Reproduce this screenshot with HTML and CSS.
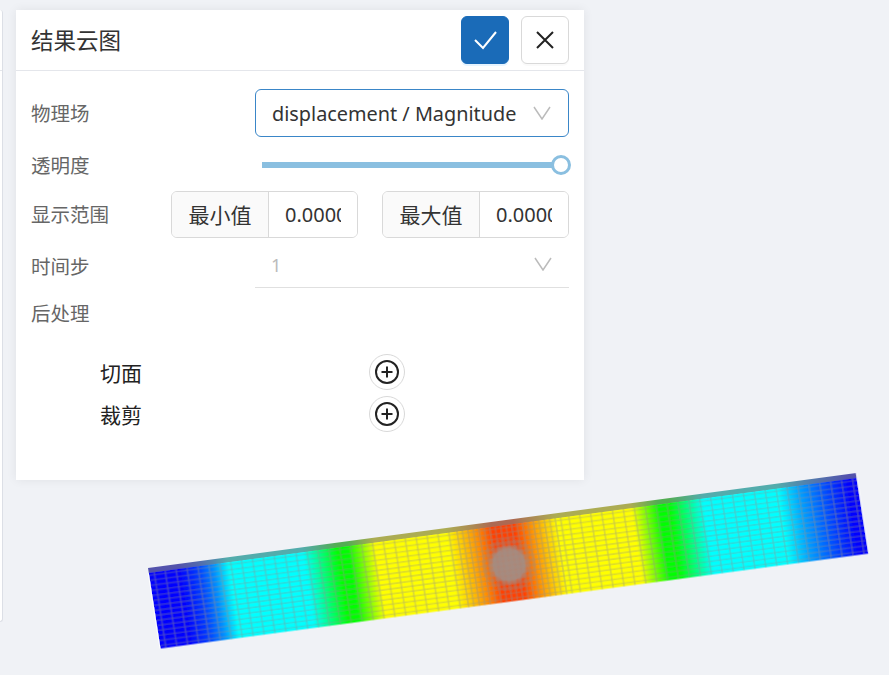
FILE: index.html
```html
<!DOCTYPE html>
<html lang="zh">
<head>
    <meta charset="UTF-8">
    <meta name="viewport" content="width=device-width, initial-scale=1.0">
    <title>结果云图</title>
    <link rel="stylesheet" href="styles.css">
</head>
<body>
    <svg class="beam" width="889" height="675" viewBox="0 0 889 675">
        <defs>
            <linearGradient id="contour" gradientUnits="userSpaceOnUse" x1="0" y1="0" x2="714" y2="0">
                <stop offset="0" stop-color="#0000ff"/>
                <stop offset="0.042" stop-color="#0000ff"/>
                <stop offset="0.07" stop-color="#0040ff"/>
                <stop offset="0.091" stop-color="#0090ff"/>
                <stop offset="0.112" stop-color="#00ffff"/>
                <stop offset="0.217" stop-color="#00ffff"/>
                <stop offset="0.266" stop-color="#00ff00"/>
                <stop offset="0.28" stop-color="#00ff00"/>
                <stop offset="0.319" stop-color="#ffff00"/>
                <stop offset="0.42" stop-color="#ffff00"/>
                <stop offset="0.462" stop-color="#ff9000"/>
                <stop offset="0.485" stop-color="#ff4000"/>
                <stop offset="0.515" stop-color="#ff4000"/>
                <stop offset="0.538" stop-color="#ff9000"/>
                <stop offset="0.576" stop-color="#ffff00"/>
                <stop offset="0.681" stop-color="#ffff00"/>
                <stop offset="0.72" stop-color="#00ff00"/>
                <stop offset="0.734" stop-color="#00ff00"/>
                <stop offset="0.783" stop-color="#00ffff"/>
                <stop offset="0.888" stop-color="#00ffff"/>
                <stop offset="0.918" stop-color="#00a0ff"/>
                <stop offset="0.952" stop-color="#0050ff"/>
                <stop offset="0.987" stop-color="#0000ff"/>
                <stop offset="1" stop-color="#0000ff"/>
            </linearGradient>
            <pattern id="mesh-wide" patternUnits="userSpaceOnUse" width="11" height="5.1" y="5">
                <path d="M0 2.55H11M5.5 0V5.1" class="mesh-line"/>
            </pattern>
            <pattern id="mesh-fine" patternUnits="userSpaceOnUse" width="5.5" height="5.1" y="5">
                <path d="M0 2.55H5.5M2.75 0V5.1" class="mesh-line"/>
            </pattern>
            <pattern id="mesh-dense" patternUnits="userSpaceOnUse" width="2.75" height="2.55" y="5">
                <path d="M0 1.27H2.75M1.37 0V2.55" class="mesh-line"/>
            </pattern>
            <radialGradient id="refine">
                <stop offset="0" stop-color="#a09088" stop-opacity="0.9"/>
                <stop offset="0.75" stop-color="#a09088" stop-opacity="0.85"/>
                <stop offset="1" stop-color="#a09088" stop-opacity="0"/>
            </radialGradient>
            <filter id="soft"><feGaussianBlur stdDeviation="0.35"/></filter>
        </defs>
        <g transform="matrix(0.9916 -0.133 0.1524 0.982 148 568)" filter="url(#soft)">
            <rect x="0" y="0" width="714" height="82" fill="url(#contour)"/>
            <rect x="0" y="5" width="308" height="77" fill="url(#mesh-wide)"/>
            <rect x="308" y="5" width="110" height="77" fill="url(#mesh-fine)"/>
            <rect x="418" y="5" width="296" height="77" fill="url(#mesh-wide)"/>
            <circle cx="357" cy="45" r="27" fill="url(#mesh-dense)" opacity="0.5"/>
            <circle cx="357" cy="45" r="21" fill="url(#refine)"/>
            <rect x="0" y="0" width="714" height="5" fill="#808080" opacity="0.65"/>
            <path d="M714.5 0L714.5 82" class="beam-edge"/>
            <path d="M-0.5 5L-0.5 82" class="beam-edge"/>
        </g>
    </svg>

    <div class="layout">
        <div class="side-panel">
            <div class="side-head"></div>
        </div>

        <section class="dialog">
            <header class="dialog-head">
                <h2 class="dialog-title">结果云图</h2>
                <button class="btn btn-primary" aria-label="确定">
                    <svg width="24" height="24" viewBox="0 0 24 24"><path d="M2 12l8 8L23 4" class="icon-ok"/></svg>
                </button>
                <button class="btn" aria-label="关闭">
                    <svg width="24" height="24" viewBox="0 0 24 24"><path d="M4 4l16 16M20 4L4 20" class="icon-close"/></svg>
                </button>
            </header>

            <div class="form">
                <div class="row row-field">
                    <label class="label">物理场</label>
                    <div class="select select-open">
                        <span class="select-text">displacement / Magnitude</span>
                        <svg class="chevron" width="18" height="14" viewBox="0 0 18 14"><path d="M1 1l8 12 8-12"/></svg>
                    </div>
                </div>

                <div class="row row-slider">
                    <label class="label">透明度</label>
                    <div class="slider">
                        <div class="slider-track"></div>
                        <div class="slider-handle"></div>
                    </div>
                </div>

                <div class="row row-range">
                    <label class="label">显示范围</label>
                    <div class="range-groups">
                        <div class="input-group">
                            <span class="addon">最小值</span>
                            <input class="group-input" type="text" value="0.00000">
                        </div>
                        <div class="input-group">
                            <span class="addon">最大值</span>
                            <input class="group-input" type="text" value="0.00000">
                        </div>
                    </div>
                </div>

                <div class="row row-field row-time">
                    <label class="label">时间步</label>
                    <div class="select select-flat">
                        <span class="select-text">1</span>
                        <svg class="chevron" width="18" height="14" viewBox="0 0 18 14"><path d="M1 1l8 12 8-12"/></svg>
                    </div>
                </div>

                <div class="row row-post">
                    <label class="label">后处理</label>
                </div>

                <ul class="post-list">
                    <li class="post-item">
                        <span class="post-name">切面</span>
                        <button class="add-btn" aria-label="添加切面">
                            <svg width="26" height="26" viewBox="0 0 26 26"><circle cx="13" cy="13" r="11"/><path d="M7.5 13h11M13 7.5v11"/></svg>
                        </button>
                    </li>
                    <li class="post-item">
                        <span class="post-name">裁剪</span>
                        <button class="add-btn" aria-label="添加裁剪">
                            <svg width="26" height="26" viewBox="0 0 26 26"><circle cx="13" cy="13" r="11"/><path d="M7.5 13h11M13 7.5v11"/></svg>
                        </button>
                    </li>
                </ul>
            </div>
        </section>
    </div>
</body>
</html>
```

FILE: styles.css
```css
* {
    box-sizing: border-box;
}

html, body {
    height: 100%;
}

body {
    margin: 0;
    background: #f0f2f6;
    font-family: "Noto Sans", "Noto Sans CJK SC", sans-serif;
    color: #333;
    overflow: hidden;
    position: relative;
}

/* model on the canvas */
.beam {
    position: absolute;
    left: 0;
    top: 0;
}

.mesh-line {
    stroke: #909090;
    stroke-opacity: 0.6;
    stroke-width: 1;
    fill: none;
}

.beam-edge {
    stroke: #fff;
    stroke-width: 1;
    fill: none;
}

.layout {
    position: relative;
    display: flex;
    align-items: flex-start;
    gap: 13px;
    padding-top: 10px;
}

.side-panel {
    width: 3px;
    height: 612px;
    background: #fff;
    border-right: 1px solid #dcdfe6;
    border-bottom: 1px solid #dcdfe6;
    border-radius: 0 4px 4px 0;
}

.side-head {
    height: 61px;
    border-bottom: 1px solid #e4e6eb;
}

.dialog {
    width: 568px;
    height: 470px;
    background: #fff;
    box-shadow: 0 0 10px rgba(0, 0, 0, 0.07);
}

.dialog-head {
    height: 61px;
    display: flex;
    align-items: center;
    gap: 12px;
    padding: 0 15px;
    border-bottom: 1px solid #e4e6eb;
}

.dialog-title {
    margin: -2px auto 0 0;
    font-size: 22.5px;
    font-weight: 400;
    color: #333;
}

.btn {
    width: 48px;
    height: 48px;
    display: flex;
    align-items: center;
    justify-content: center;
    padding: 0;
    background: #fff;
    border: 1px solid #d9d9d9;
    border-radius: 6px;
    box-shadow: 0 2px 0 rgba(0, 0, 0, 0.02);
}

.btn-primary {
    background: #1a6bb8;
    border-color: #1a6bb8;
    box-shadow: 0 2px 0 rgba(5, 145, 255, 0.1);
}

.icon-ok {
    stroke: #fff;
    stroke-width: 2;
    fill: none;
}

.icon-close {
    stroke: #222;
    stroke-width: 2;
    fill: none;
}

.form {
    display: flex;
    flex-direction: column;
    padding: 18px 15px 0;
}

.row {
    display: flex;
    align-items: center;
    justify-content: space-between;
}

.label {
    margin-top: -2px;
    font-size: 19.5px;
    color: #666;
}

.row-field {
    height: 48px;
}

.row-slider {
    height: 36px;
    margin-top: 10px;
}

.row-range {
    height: 47px;
    margin-top: 8px;
}

.row-time {
    margin-top: 2px;
}

.row-time .label {
    padding-top: 5px;
}

.select-flat .select-text {
    padding-top: 3px;
}

.row-post {
    height: 26px;
    margin-top: 12px;
}

.select {
    width: 314px;
    height: 48px;
    display: flex;
    align-items: center;
    justify-content: space-between;
    padding: 0 17px 0 16px;
    background: #fff;
    font-size: 19.85px;
}

.select-open {
    border: 1px solid #3a86c8;
    border-radius: 6px;
}

.select-flat {
    border-bottom: 1px solid #e0e0e0;
    color: #bbb;
    font-size: 18px;
}

.chevron path {
    stroke: #bbb;
    stroke-width: 1.5;
    fill: none;
}

.slider {
    position: relative;
    width: 314px;
    height: 20px;
}

.slider-track {
    margin: 7px 8px 0 7px;
    height: 6px;
    background: #8abfe0;
}

/* knob sits over the end of the track */
.slider-handle {
    position: absolute;
    right: -2px;
    top: 0;
    width: 20px;
    height: 20px;
    background: #fff;
    border: 3px solid #8abfe0;
    border-radius: 50%;
}

.range-groups {
    display: flex;
    gap: 24px;
}

.input-group {
    width: 187px;
    height: 47px;
    display: flex;
    border: 1px solid #d9d9d9;
    border-radius: 6px;
    overflow: hidden;
}

.addon {
    width: 97px;
    display: flex;
    align-items: center;
    justify-content: center;
    flex: none;
    padding-bottom: 2px;
    background: #fafafa;
    border-right: 1px solid #d9d9d9;
    font-size: 21px;
}

.group-input {
    width: 100%;
    min-width: 0;
    padding: 0 16px;
    border: none;
    outline: none;
    font-family: inherit;
    font-size: 20px;
    color: #333;
    background: #fff;
}

.post-list {
    list-style: none;
    margin: 28px 0 0;
    padding: 0 0 0 69px;
    display: flex;
    flex-direction: column;
    gap: 6px;
}

.post-item {
    display: grid;
    grid-template-columns: 269px 36px;
    align-items: center;
    height: 36px;
}

.post-name {
    font-size: 21px;
    color: #222;
}

.add-btn {
    width: 36px;
    height: 36px;
    display: flex;
    align-items: center;
    justify-content: center;
    padding: 0;
    background: #fff;
    border: 1px solid #d9d9d9;
    border-radius: 50%;
}

.add-btn circle,
.add-btn path {
    stroke: #222;
    stroke-width: 2;
    fill: none;
}
```
